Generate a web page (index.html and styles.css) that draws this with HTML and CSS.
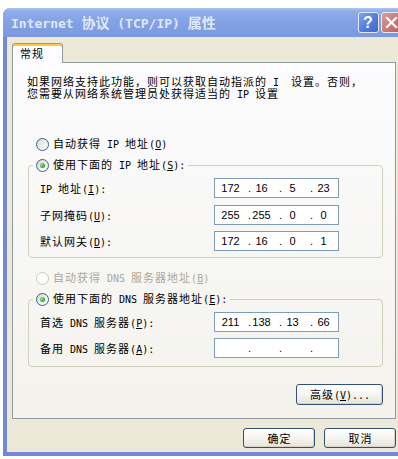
FILE: index.html
```html
<!DOCTYPE html>
<html lang="zh-CN">
<head>
<meta charset="utf-8">
<title>Internet 协议 (TCP/IP) 属性</title>
<link rel="stylesheet" href="styles.css">
</head>
<body>
<div class="desk">
  <div class="window">
    <div class="titlebar">
      <div class="title"><span class="tm">Internet </span>协议<span class="tm"> (TCP/IP) </span>属性</div>
      <div class="tbtn help">?</div>
      <div class="tbtn close"><svg width="19" height="19" viewBox="0 0 19 19"><path d="M5 5 L14 14 M14 5 L5 14" stroke="#fff" stroke-width="2.2" stroke-linecap="square"/></svg></div>
    </div>
    <div class="client">
      <div class="tabs"><div class="tab">常规</div></div>
      <div class="panel">
        <div class="desc">
          <div class="line">如果网络支持此功能，则可以获取自动指派的<span class="m"> I  </span>设置。否则，</div>
          <div class="line">您需要从网络系统管理员处获得适当的<span class="m"> IP </span>设置</div>
        </div>

        <div class="opt first"><span class="radio"></span><span>自动获得<span class="m"> IP </span>地址<span class="m">(<u>O</u>)</span></span></div>

        <fieldset class="group g1">
          <legend><div class="opt"><span class="radio on"></span><span>使用下面的<span class="m"> IP </span>地址<span class="m">(<u>S</u>):</span></span></div></legend>
          <div class="rows">
            <div class="row"><span class="lbl"><span class="m">IP </span>地址<span class="m">(<u>I</u>):</span></span>
              <div class="ip"><span class="n c1">172</span><span class="d c2">.</span><span class="n c2">16</span><span class="d c3">.</span><span class="n c3">5</span><span class="d c4">.</span><span class="n c4">23</span></div></div>
            <div class="row"><span class="lbl">子网掩码<span class="m">(<u>U</u>):</span></span>
              <div class="ip"><span class="n c1">255</span><span class="d c2">.</span><span class="n c2">255</span><span class="d c3">.</span><span class="n c3">0</span><span class="d c4">.</span><span class="n c4">0</span></div></div>
            <div class="row"><span class="lbl">默认网关<span class="m">(<u>D</u>):</span></span>
              <div class="ip"><span class="n c1">172</span><span class="d c2">.</span><span class="n c2">16</span><span class="d c3">.</span><span class="n c3">0</span><span class="d c4">.</span><span class="n c4">1</span></div></div>
          </div>
        </fieldset>

        <div class="opt after disabled"><span class="radio"></span><span>自动获得<span class="m"> DNS </span>服务器地址<span class="m">(<u>B</u>)</span></span></div>

        <fieldset class="group g2">
          <legend><div class="opt"><span class="radio on"></span><span>使用下面的<span class="m"> DNS </span>服务器地址<span class="m">(<u>E</u>):</span></span></div></legend>
          <div class="rows">
            <div class="row"><span class="lbl">首选<span class="m"> DNS </span>服务器<span class="m">(<u>P</u>):</span></span>
              <div class="ip"><span class="n c1">211</span><span class="d c2">.</span><span class="n c2">138</span><span class="d c3">.</span><span class="n c3">13</span><span class="d c4">.</span><span class="n c4">66</span></div></div>
            <div class="row"><span class="lbl">备用<span class="m"> DNS </span>服务器<span class="m">(<u>A</u>):</span></span>
              <div class="ip"><span class="d c2">.</span><span class="d c3">.</span><span class="d c4">.</span></div></div>
          </div>
        </fieldset>

        <button class="btn adv">高级<span class="m">(<u>V</u>)...</span></button>
      </div>
      <div class="buttons">
        <button class="btn">确定</button>
        <button class="btn">取消</button>
      </div>
    </div>
  </div>
</div>
</body>
</html>
```

FILE: styles.css
```css
* { box-sizing: border-box; }
html, body { margin: 0; padding: 0; }
body {
  width: 398px;
  height: 459px;
  overflow: hidden;
  background: #fff;
  font-family: "Noto Sans CJK SC", "Noto Sans", sans-serif;
  font-size: 11px;
  letter-spacing: 1px;
  color: #000;
}
.m {
  font-family: "DejaVu Sans Mono", monospace;
  font-size: 10px;
  letter-spacing: 0;
  white-space: pre;
}
.desk { padding: 8px 0 0 3px; }
.window {
  width: 402px;
  height: 448px;
  display: flex;
  flex-direction: column;
  background: #7489d6;
  border-radius: 7px 7px 0 0;
}
.titlebar {
  height: 29px;
  flex: none;
  display: flex;
  align-items: center;
  padding: 0 3px 0 8px;
  border-radius: 7px 7px 0 0;
  background: linear-gradient(#b0c4f2 0, #90aeea 3px, #85a4e5 40%, #7a99df 100%);
}
.title {
  flex: 1;
  font-weight: bold;
  font-size: 14px;
  letter-spacing: 0;
  line-height: 16px;
  color: #dfe8fa;
  white-space: nowrap;
}
.tm {
  font-family: "DejaVu Sans Mono", monospace;
  font-size: 13px;
  white-space: pre;
}
.tbtn {
  width: 21px;
  height: 21px;
  border: 1px solid #e2e8f6;
  border-radius: 3px;
  display: flex;
  align-items: center;
  justify-content: center;
}
.help {
  background: linear-gradient(135deg, #7ea3ee, #5079d8 60%, #4069cf);
  color: #fff;
  font-family: "Liberation Sans", sans-serif;
  font-weight: bold;
  font-size: 16px;
}
.close {
  margin-left: 2px;
  background: linear-gradient(135deg, #dc9c98, #c67672 60%, #b9645f);
}
.client {
  flex: 1;
  margin: 0 4px 4px;
  background: #ece9d8;
  padding: 6px 5px 0;
  display: flex;
  flex-direction: column;
}
.tabs { display: flex; height: 19px; flex: none; }
.tab {
  width: 51px;
  height: 20px;
  border: 1px solid #919b9c;
  border-bottom: none;
  border-top-color: #e68b2c;
  box-shadow: inset 0 2px 0 #ffc83c;
  border-radius: 3px 3px 0 0;
  background: #fcfcfe;
  padding: 2px 0 0 7px;
  line-height: 14px;
  position: relative;
  z-index: 1;
}
.panel {
  border: 1px solid #919b9c;
  background: linear-gradient(#fcfcfe, #f3f2ec);
  padding: 13px 12px 13px 14px;
  display: flex;
  flex-direction: column;
}
.desc {
  display: flex;
  flex-direction: column;
}
.desc .line {
  height: 11px;
  line-height: 11px;
  white-space: nowrap;
}
.desc .line + .line { margin-top: 1px; }
.opt {
  display: flex;
  align-items: center;
  gap: 4px;
  height: 16px;
  line-height: 16px;
  padding-left: 9px;
  white-space: nowrap;
}
.opt.first { margin-top: 37px; }
.opt.after { margin-top: 12px; }
.opt.disabled { color: #aca899; }
.radio {
  flex: none;
  width: 13px;
  height: 13px;
  border: 1px solid #3d5f8e;
  border-radius: 50%;
  background: linear-gradient(135deg, #d6d6ce, #f4f4f0 60%, #fff);
  display: flex;
  align-items: center;
  justify-content: center;
}
.disabled .radio {
  border-color: #cac8bb;
  background: #fff;
}
.radio.on::after {
  content: "";
  width: 5px;
  height: 5px;
  border-radius: 50%;
  background: radial-gradient(circle at 35% 35%, #8ee88a, #2aa628 70%, #1d8e1b);
}
.group {
  margin: 5px 0 0 1px;
  padding: 5px 0 6px 11px;
  border: 1px solid #d0d0bf;
  border-radius: 4px;
  min-width: 0;
}
.group legend {
  padding: 0 3px;
  margin-left: -7px;
}
.group legend .opt { padding-left: 0; }
.g2 { padding-bottom: 8px; }
.rows {
  display: flex;
  flex-direction: column;
  gap: 6.5px;
}
.g2 .rows { gap: 6px; }
.row {
  display: flex;
  align-items: center;
  height: 20px;
}
.lbl {
  width: 174px;
  flex: none;
  white-space: nowrap;
}
.ip {
  width: 125px;
  height: 20px;
  border: 1px solid #7f9db9;
  background: #fff;
  display: grid;
  grid-template-columns: repeat(4, 31px);
  grid-template-rows: 18px;
  align-items: center;
  font-family: "Liberation Sans", sans-serif;
  font-size: 11px;
  letter-spacing: 0;
}
.n, .d { grid-row: 1; }
.n { justify-self: center; }
.d { justify-self: start; margin-left: 2px; }
.c1 { grid-column: 1; }
.c2 { grid-column: 2; }
.c3 { grid-column: 3; }
.c4 { grid-column: 4; }
.btn {
  font-family: inherit;
  font-size: 11px;
  letter-spacing: 1px;
  color: #000;
  padding: 0 0 0 1px;
  border: 1px solid #34507a;
  border-radius: 3px;
  background: linear-gradient(#ffffff, #f5f5f1 50%, #e6e4da);
  box-shadow: inset -1px -1px 0 #d8d2c6;
  line-height: 18px;
  width: 72px;
  height: 20px;
}
.btn.adv {
  align-self: flex-end;
  width: 87px;
  height: 21px;
  margin-top: 17px;
}
.buttons {
  display: flex;
  justify-content: flex-end;
  gap: 9px;
  margin-top: 9px;
}
```
